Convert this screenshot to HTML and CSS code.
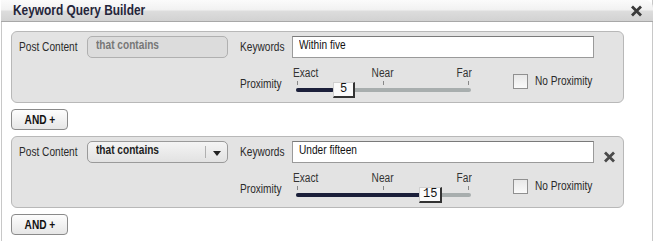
FILE: index.html
```html
<!DOCTYPE html>
<html>
<head>
<meta charset="utf-8">
<link rel="stylesheet" href="styles.css">
</head>
<body>
<div class="dialog">
  <div class="titlebar">
    <span class="title n">Keyword Query Builder</span>
    <svg class="close" width="13" height="12" viewBox="0 0 13 12"><path d="M2 1.5 L11 10.5 M11 1.5 L2 10.5" stroke="#3a3a3a" stroke-width="2.8" stroke-linecap="butt"/></svg>
  </div>
  <div class="content">
    <div class="group">
      <div class="lbl lbl-post"><span class="n">Post Content</span></div>
      <div class="select disabled"><span class="n">that contains</span></div>
      <div class="right">
        <div class="row">
          <div class="lbl lbl-kw"><span class="n">Keywords</span></div>
          <div class="input"><span class="n">Within five</span></div>
        </div>
        <div class="row prox">
          <div class="lbl lbl-kw lbl-prox"><span class="n">Proximity</span></div>
          <div class="slider">
            <div class="marks"><span class="n m1">Exact</span><span class="n nc m2">Near</span><span class="n nr m3">Far</span></div>
            <div class="ticks"><i></i><i></i><i></i></div>
            <div class="track"><div class="fill" style="width:38px"></div><div class="thumb" style="left:37px">5</div></div>
          </div>
          <div class="check"></div>
          <div class="lbl lbl-np"><span class="n">No Proximity</span></div>
        </div>
      </div>
    </div>
    <button class="and"><span class="n nc">AND +</span></button>
    <div class="group">
      <div class="lbl lbl-post"><span class="n">Post Content</span></div>
      <div class="select"><span class="n">that contains</span><span class="arrow"></span></div>
      <div class="right">
        <div class="row">
          <div class="lbl lbl-kw"><span class="n">Keywords</span></div>
          <div class="input"><span class="n">Under fifteen</span></div>
          <svg class="remove" width="13" height="12" viewBox="0 0 13 12"><path d="M2 1.5 L11 10.5 M11 1.5 L2 10.5" stroke="#4a4a4a" stroke-width="2.8"/></svg>
        </div>
        <div class="row prox">
          <div class="lbl lbl-kw lbl-prox"><span class="n">Proximity</span></div>
          <div class="slider">
            <div class="marks"><span class="n m1">Exact</span><span class="n nc m2">Near</span><span class="n nr m3">Far</span></div>
            <div class="ticks"><i></i><i></i><i></i></div>
            <div class="track"><div class="fill" style="width:125px"></div><div class="thumb" style="left:123px">15</div></div>
          </div>
          <div class="check"></div>
          <div class="lbl lbl-np"><span class="n">No Proximity</span></div>
        </div>
      </div>
    </div>
    <button class="and"><span class="n nc">AND +</span></button>
  </div>
</div>
</body>
</html>
```
FILE: styles.css
```css
html, body { margin: 0; padding: 0; background: #fff; }
body { font-family: "Liberation Sans", Arial, sans-serif; font-size: 12.5px; color: #222; width: 654px; height: 241px; overflow: hidden; }
.n { display: inline-block; transform: scaleX(0.81); transform-origin: 0 50%; white-space: nowrap; }
.n.nc { transform-origin: 50% 50%; }
.n.nr { transform-origin: 100% 50%; }
.dialog { width: 652px; height: 241px; border-left: 1px solid #c8c8c8; border-right: 1px solid #c8c8c8; margin-left: 1px; box-sizing: border-box; position: relative; }
.titlebar { height: 21px; border-bottom: 1px solid #a8a8a8; border-top-right-radius: 8px; background: linear-gradient(#fbfbfb 0%, #f2f2f2 45%, #dcdcdc 55%, #d2d2d2 100%); display: flex; align-items: center; justify-content: space-between; padding: 0 10px 0 12px; margin-left: -1px; margin-right: -1px; }
.title { font-weight: bold; font-size: 14.5px; color: #25253a; margin-top: -1px; transform: scaleX(0.82); }
.close { margin-top: 1px; }
.content { padding: 9px 0 0 9px; }
.group { width: 613px; height: 72px; box-sizing: border-box; border: 1px solid #b8b8b8; border-radius: 6px; background: #e3e3e3; display: flex; padding: 4px 0 0 7px; }
.lbl { line-height: 16px; white-space: nowrap; flex-shrink: 0; color: #2a2a2a; }
.lbl-post { width: 68px; margin-top: 3px; }
.select { flex-shrink: 0; width: 141px; height: 22px; box-sizing: border-box; border: 1px solid #9a9a9a; border-radius: 5px; background: linear-gradient(#f4f4f4, #e2e2e2); font-weight: bold; color: #222; padding: 0 0 0 8px; line-height: 16px; display: flex; justify-content: space-between; }
.select.disabled { border-color: #b0b0b0; color: #777; background: #dcdcdc; }
.arrow { width: 21px; border-left: 1px solid #b0b0b0; margin: 4px 0; position: relative; }
.arrow::after { content: ""; position: absolute; left: 7px; top: 5px; border-left: 4px solid transparent; border-right: 4px solid transparent; border-top: 5px solid #222; }
.right { margin-left: 12px; display: flex; flex-direction: column; }
.row { display: flex; align-items: flex-start; }
.lbl-kw { width: 52px; margin-top: 3px; }
.input { flex-shrink: 0; width: 302px; height: 22px; box-sizing: border-box; border: 1px solid #9a9a9a; border-top-color: #7a7a7a; background: #fff; padding: 0 6px; line-height: 16px; color: #111; }
.remove { margin: 10px 0 0 9px; }
.prox { margin-top: 6px; }
.lbl-prox { margin-top: 12px; }
.slider { flex-shrink: 0; width: 181px; margin: 3px 0 0 1px; }
.marks { display: grid; grid-template-columns: 1fr auto 1fr; line-height: 13px; color: #333; padding-right: 2px; }
.m1 { justify-self: start; }
.m2 { justify-self: center; }
.m3 { justify-self: end; }
.ticks { position: relative; height: 5px; }
.ticks i { position: absolute; top: 1px; width: 1px; height: 4px; background: #888; }
.ticks i:nth-child(1) { left: 4px; }
.ticks i:nth-child(2) { left: 90px; }
.ticks i:nth-child(3) { left: 175px; }
.track { position: relative; margin: 3px 0 0 3px; width: 175px; height: 4px; border-radius: 2px; background: #a8aeae; }
.fill { position: absolute; left: 0; top: 0; height: 4px; border-radius: 2px; background: #1b1f3a; }
.thumb { position: absolute; top: -6px; min-width: 13px; height: 13px; padding: 0 3px; box-sizing: content-box; background: #fafafa; border: 1px solid #d0d0d0; border-right: 2px solid #333; border-bottom: 2px solid #333; font-family: "Liberation Mono", monospace; font-size: 12px; line-height: 13px; text-align: center; color: #111; }
.check { flex-shrink: 0; width: 13px; height: 13px; border: 1px solid #909090; background: linear-gradient(#e8e8e8, #fafafa); margin: 10px 7px 0 39px; }
.lbl-np { margin-top: 9px; }
.and { display: block; margin: 6px 0 6px 0; width: 57px; height: 21px; border: 1px solid #8a8a8a; border-radius: 4px; background: linear-gradient(#fdfdfd, #e6e6e6); font-family: inherit; font-weight: bold; font-size: 12.5px; color: #111; padding: 0; }
```
